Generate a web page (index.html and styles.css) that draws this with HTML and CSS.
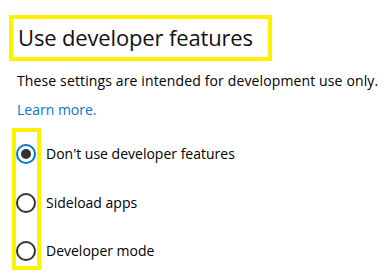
FILE: index.html
```html
<!DOCTYPE html>
<html>
<head>
<meta charset="utf-8">
<link rel="stylesheet" href="styles.css">
</head>
<body>
<div class="page">
  <h1 class="title">Use developer features</h1>
  <p class="desc">These settings are intended for development use only.</p>
  <a class="link" href="#">Learn more.</a>
  <div class="options">
    <div class="radio-col">
      <span class="radio checked"></span>
      <span class="radio"></span>
      <span class="radio"></span>
    </div>
    <div class="label-col">
      <span class="label">Don't use developer features</span>
      <span class="label">Sideload apps</span>
      <span class="label">Developer mode</span>
    </div>
  </div>
</div>
</body>
</html>
```

FILE: styles.css
```css
html, body {
  margin: 0;
  padding: 0;
  background: #ffffff;
}
.page {
  font-family: "Open Sans", "Noto Sans", sans-serif;
  color: #000;
  padding-top: 15px;
  display: flex;
  flex-direction: column;
  align-items: flex-start;
}
.title {
  box-sizing: border-box;
  width: 263px;
  height: 46px;
  margin: 0 0 0 9px;
  border: 4px solid #fff200;
  padding: 0 0 0 5px;
  font-size: 22px;
  font-weight: 400;
  letter-spacing: -0.15px;
  line-height: 37px;
  white-space: nowrap;
  color: #111;
}
.desc {
  margin: 10px 0 0 17px;
  font-size: 14px;
  letter-spacing: 0.13px;
  line-height: 20px;
  white-space: nowrap;
}
.link {
  margin: 9px 0 0 17px;
  font-size: 14px;
  line-height: 20px;
  color: #0a74cf;
  text-decoration: none;
}
.options {
  display: flex;
  margin: 8px 0 0 12px;
}
.radio-col {
  box-sizing: border-box;
  width: 29px;
  border: 4px solid #fff200;
  padding: 12px 0 5px 0;
  display: flex;
  flex-direction: column;
  gap: 28.5px;
}
.radio {
  box-sizing: border-box;
  width: 20px;
  height: 20px;
  border-radius: 50%;
  border: 2px solid #333;
  display: flex;
  align-items: center;
  justify-content: center;
}
.radio.checked {
  border-color: #0078d7;
}
.radio.checked::after {
  content: "";
  width: 10px;
  height: 10px;
  border-radius: 50%;
  background: #333;
}
.label-col {
  display: flex;
  flex-direction: column;
  gap: 28.5px;
  padding-top: 16px;
  margin-left: 5px;
}
.label {
  font-size: 14px;
  line-height: 20px;
  white-space: nowrap;
}
```
